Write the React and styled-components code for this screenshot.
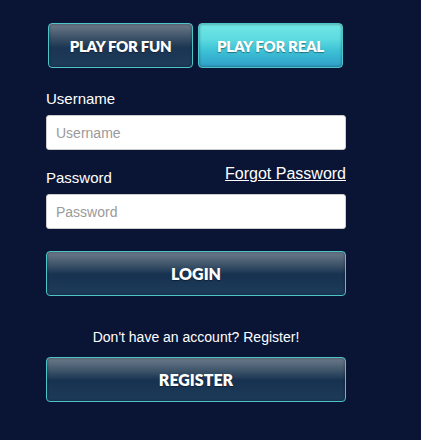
import React from "react"
import styled, { createGlobalStyle } from "styled-components"

const GlobalStyle = createGlobalStyle`
  html, body {
    margin: 0;
    padding: 0;
    background: #0a1536;
  }
  body {
    font-family: "Liberation Sans", Arial, sans-serif;
  }
`

function App() {
  return (
    <>
      <GlobalStyle />
      <Page>
        <Form onSubmit={e => e.preventDefault()}>
          <Tabs>
            <TabButton type="button">Play for fun</TabButton>
            <TabButton type="button" active>Play for real</TabButton>
          </Tabs>

          <LabelRow>
            <Label htmlFor="username">Username</Label>
          </LabelRow>
          <Input id="username" placeholder="Username" />

          <LabelRow>
            <Label htmlFor="password">Password</Label>
            <Forgot href="#">Forgot Password</Forgot>
          </LabelRow>
          <Input id="password" type="password" placeholder="Password" />

          <ActionButton type="submit">Login</ActionButton>

          <Hint>Don't have an account? Register!</Hint>
          <ActionButton type="button" tight>Register</ActionButton>
        </Form>
      </Page>
    </>
  )
}

const Page = styled.div`
  width: 421px;
  height: 440px;
  background: #0a1536;
  padding: 23px 0 0 46px;
  box-sizing: border-box;
`
const Form = styled.form`
  width: 300px;
  display: flex;
  flex-direction: column;
`
const Tabs = styled.div`
  display: flex;
  gap: 5px;
  padding: 0 3px 0 2px;
  margin-bottom: 22px;
`
const buttonBase = `
  box-sizing: border-box;
  border: 1px solid #4cc4c8;
  border-radius: 4px;
  color: #fff;
  font-family: Lato, "Open Sans", sans-serif;
  font-weight: 800;
  text-transform: uppercase;
  cursor: pointer;
  padding: 0;
  box-shadow: inset 0 0 3px rgba(0, 0, 0, 0.45);
  text-shadow: 0 1px 1px rgba(0, 0, 0, 0.4);
`
const TabButton = styled.button`
  ${buttonBase}
  flex: 1;
  height: 45px;
  font-size: 15px;
  letter-spacing: -0.3px;
  background: ${p => p.active
    ? "linear-gradient(to bottom, #72e6e6 0%, #5ddbe0 35%, #3ec3d6 60%, #2f9fc8 100%)"
    : "linear-gradient(to bottom, #6e7b8c 0%, #3f5469 30%, #1b3553 55%, #1e3c5c 100%)"};
`
const LabelRow = styled.div`
  display: flex;
  justify-content: space-between;
  align-items: flex-end;
  height: 17px;
  margin-bottom: 8px;
`
const Label = styled.label`
  color: #fff;
  font-size: 15px;
  line-height: 17px;
`
const Forgot = styled.a`
  color: #fff;
  font-size: 16px;
  line-height: 18px;
  text-decoration: underline;
  margin-bottom: 3px;
`
const Input = styled.input`
  box-sizing: border-box;
  width: 100%;
  height: 35px;
  margin: 0 0 19px;
  border: 1px solid #ccc;
  border-radius: 3px;
  padding: 0 9px;
  font-family: "Liberation Sans", Arial, sans-serif;
  font-size: 14px;
  color: #333;
  background: #fff;
  &::placeholder {
    color: #9a9a9a;
  }
`
const ActionButton = styled.button`
  ${buttonBase}
  width: 100%;
  height: 45px;
  font-size: 16px;
  margin-top: ${p => (p.tight ? "0" : "3px")};
  background: linear-gradient(to bottom, #6e7b8c 0%, #40566b 28%, #173250 52%, #1d3b5b 100%);
`
const Hint = styled.p`
  color: #fff;
  font-size: 14px;
  line-height: 16px;
  text-align: center;
  margin: 33px 0 12px;
`

export default App
